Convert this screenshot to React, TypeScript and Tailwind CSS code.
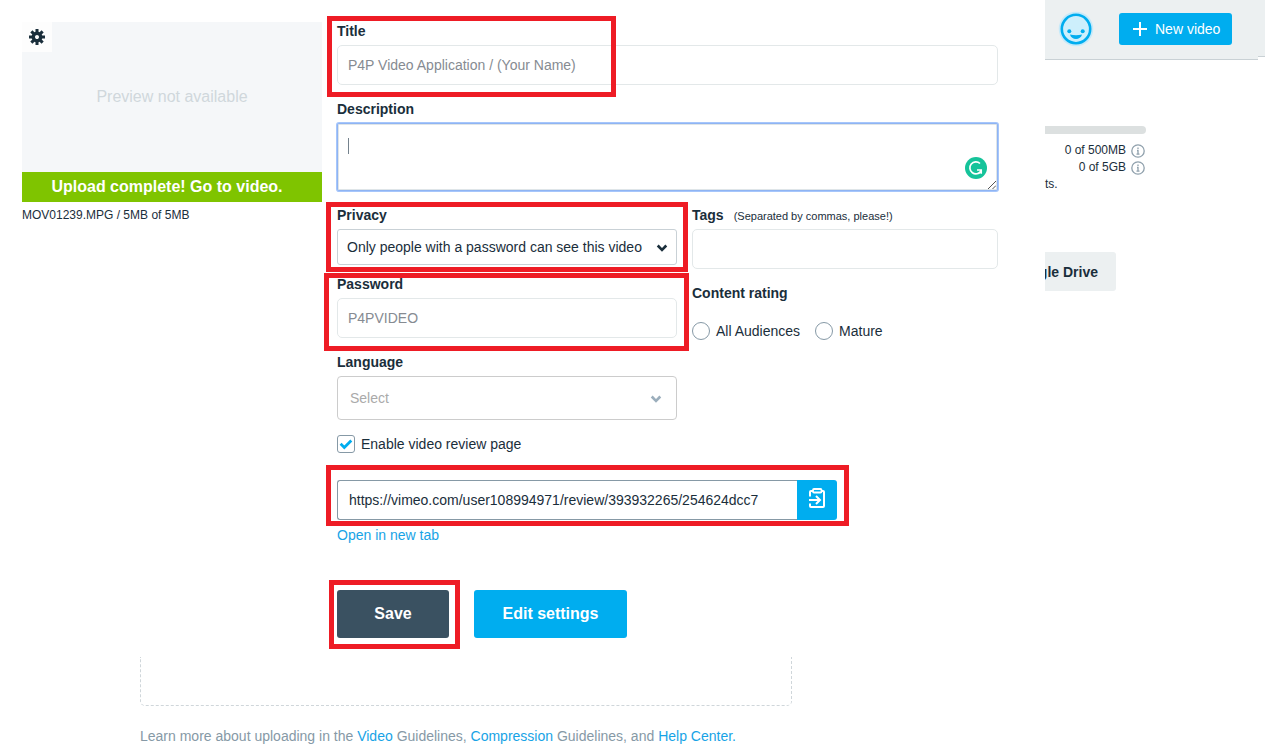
import type { ReactNode } from "react"

const inputClass =
  "h-10 w-full rounded-[5px] border border-[#e3e8e9] bg-white px-2.5 text-sm text-[#868b92] outline-none"

export default function App() {
  return (
    <div className="bg-white font-['Liberation_Sans',Arial,sans-serif] text-sm text-[#1a2e3b]">
      <div className="flex">
        <main className="flex min-w-0 flex-1 items-start gap-[15px] pt-[22px] pr-[47px] pl-[22px]">
          <UploadPreview />
          <VideoForm />
        </main>
        <Sidebar />
      </div>
      <Footer />
    </div>
  )
}

function Highlight({ className }: { className: string }) {
  return (
    <span aria-hidden className={`pointer-events-none absolute z-10 border-[5px] border-[#ee1c25] ${className}`} />
  )
}

function Label({ htmlFor, children }: { htmlFor: string; children: ReactNode }) {
  return (
    <label htmlFor={htmlFor} className="mb-[5px] block leading-[18px] font-bold">
      {children}
    </label>
  )
}

function Chevron({ className }: { className: string }) {
  return (
    <svg
      aria-hidden
      viewBox="0 0 12 8"
      className={`pointer-events-none absolute h-2 w-3 ${className}`}
      fill="none"
      stroke="currentColor"
      strokeWidth="2.6"
    >
      <path d="M1.700 1.500 6 5.800l4.300-4.300" />
    </svg>
  )
}

function UploadPreview() {
  return (
    <section className="w-[300px] shrink-0">
      <div className="relative flex h-[150px] items-center justify-center bg-[#f5f7f9] text-base text-[#d0d7dc]">
        <button type="button" aria-label="Settings" className="absolute top-0 left-0 flex size-[30px] items-center justify-center bg-[#fdfdfd]">
          <GearIcon />
        </button>
        Preview not available
      </div>
      <a href="#" className="block bg-[#7fc400] pr-2.5 text-center text-base leading-[30px] font-bold text-white">
        Upload complete! Go to video.
      </a>
      <p className="mt-1 text-xs leading-[18px]">MOV01239.MPG / 5MB of 5MB</p>
    </section>
  )
}

function GearIcon() {
  return (
    <svg aria-hidden viewBox="-8 -8 16 16" className="size-4 text-[#1a2e3b]" fill="none" stroke="currentColor">
      <circle r="3.700" strokeWidth="3.400" />
      {[0, 45, 90, 135].map((a) => (
        <path key={a} d="M0-8v4M0 4v4" strokeWidth="3" transform={`rotate(${a})`} />
      ))}
    </svg>
  )
}

function VideoForm() {
  return (
    <form className="min-w-0 flex-1">
      <div className="relative">
        <Highlight className="-top-1.5 -left-2.5 h-[81px] w-[289px]" />
        <Label htmlFor="title">Title</Label>
        <input id="title" className={inputClass} defaultValue="P4P Video Application / (Your Name)" />
      </div>

      <div className="mt-[15px]">
        <Label htmlFor="description">Description</Label>
        <div className="relative">
          <textarea
            id="description"
            className="block h-[68px] w-full resize-none rounded-[2px] border border-[#8fb4f3] bg-white p-2.5 shadow-[0_0_0_1px_#a6c6fb,inset_0_0_0_1px_#dfe5e8] outline-none"
          />
          <span aria-hidden className="absolute top-[15px] left-[11px] h-4 w-px bg-[#75828d]" />
          <svg aria-hidden viewBox="0 0 22 22" className="absolute right-[11px] bottom-3 size-[22px]">
            <circle cx="11" cy="11" r="11" fill="#15c39a" />
            <path
              d="M15 6.500A6 6 0 1 0 16 14M12 13h4.200v3.800"
              fill="none"
              stroke="#fff"
              strokeWidth="1.700"
            />
          </svg>
          <svg aria-hidden viewBox="0 0 8 8" className="absolute right-0.5 bottom-0.5 size-2" stroke="#555" strokeWidth="1">
            <path d="M0 8 8 0M4.500 8 8 4.500" />
          </svg>
        </div>
      </div>

      <div className="mt-[15px] grid grid-cols-[340px_1fr] gap-[15px]">
        <div>
          <div className="relative">
            <Highlight className="-top-1 -left-[11px] h-[70px] w-[362px]" />
            <Label htmlFor="privacy">Privacy</Label>
            <div className="relative">
              <select
                id="privacy"
                className="block h-9 w-full appearance-none rounded-[3px] border border-[#c9d1d6] bg-white pr-8 pl-[9px] text-sm outline-none"
              >
                <option>Only people with a password can see this video</option>
              </select>
              <Chevron className="top-[15px] right-[9px]" />
            </div>
          </div>

          <div className="relative mt-2.5">
            <Highlight className="-top-0.5 -left-[13px] h-[78px] w-[365px]" />
            <Label htmlFor="password">Password</Label>
            <input id="password" className={inputClass} defaultValue="P4PVIDEO" />
          </div>

          <div className="mt-[15px]">
            <Label htmlFor="language">Language</Label>
            <div className="relative">
              <select
                id="language"
                className="block h-11 w-full appearance-none rounded-[4px] border border-[#cccccc] bg-white pr-8 pl-3 text-sm text-[#aaaaaa] outline-none"
              >
                <option>Select</option>
              </select>
              <Chevron className="top-[19px] right-[15px] text-[#9baebc]" />
            </div>
          </div>

          <label className="mt-[15px] flex items-center gap-1.5 leading-[18px]">
            <span className="relative size-[18px]">
              <input
                type="checkbox"
                defaultChecked
                className="peer block size-[18px] appearance-none rounded-[3px] border border-[#8699a6] bg-white"
              />
              <svg
                aria-hidden
                viewBox="0 0 18 18"
                className="pointer-events-none absolute inset-0 hidden size-[18px] peer-checked:block"
                fill="none"
                stroke="#00adef"
                strokeWidth="2.800"
              >
                <path d="m3.600 8.800 3.700 3.700L14.300 5.500" />
              </svg>
            </span>
            Enable video review page
          </label>
        </div>

        <div>
          <div className="mb-[5px] flex h-[18px] items-baseline gap-2.5 leading-[18px]">
            <label htmlFor="tags" className="font-bold">
              Tags
            </label>
            <span className="text-[11px]">(Separated by commas, please!)</span>
          </div>
          <input id="tags" className={inputClass} />

          <fieldset className="mt-[15px]">
            <legend className="leading-[18px] font-bold">Content rating</legend>
            <div className="mt-5 flex gap-[15px] leading-[18px]">
              <Radio label="All Audiences" />
              <Radio label="Mature" />
            </div>
          </fieldset>
        </div>
      </div>

      <div className="relative mt-[27px] flex w-[500px]">
        <Highlight className="-top-[15px] -left-[11px] h-[61px] w-[523px]" />
        <input
          readOnly
          aria-label="Review page link"
          className="h-10 min-w-0 flex-1 rounded-l-[3px] border border-r-0 border-[#8699a6] bg-white px-[11px] text-sm outline-none"
          value="https://vimeo.com/user108994971/review/393932265/254624dcc7"
        />
        <button type="button" aria-label="Copy link" className="flex size-10 justify-center rounded-r-[3px] bg-[#00adef] pt-2">
          <svg aria-hidden viewBox="0 0 16 20" className="h-5 w-4" fill="none" stroke="#fff" strokeWidth="2">
            <path d="M1 8.500V4q0-1 1-1h2M12 3h2q1 0 1 1v14q0 1-1 1H2q-1 0-1-1v-2.500" />
            <rect x="4" y="1" width="8.500" height="3.500" rx="1" fill="#00adef" strokeWidth="1.800" />
            <path d="M0 12h11M7 8l4 4-4 4" />
          </svg>
        </button>
      </div>
      <a href="#" className="mt-1.5 block w-fit leading-[18px] text-[#17a3e6]">
        Open in new tab
      </a>

      <div className="mt-[46px] flex gap-[25px] text-base font-bold text-white">
        <div className="relative">
          <Highlight className="-top-2.5 -left-2 h-[69px] w-[131px]" />
          <button type="button" className="h-12 w-28 rounded-[3px] bg-[#3a5161]">
            Save
          </button>
        </div>
        <button type="button" className="h-12 w-[153px] rounded-[3px] bg-[#00adef]">
          Edit settings
        </button>
      </div>
    </form>
  )
}

function Radio({ label }: { label: string }) {
  return (
    <label className="flex items-center gap-1.5">
      <input
        type="radio"
        name="rating"
        className="size-[18px] appearance-none rounded-full border border-[#8699a6] bg-white checked:border-[5px] checked:border-[#00adef]"
      />
      {label}
    </label>
  )
}

function InfoIcon() {
  return (
    <svg aria-hidden viewBox="0 0 14 14" className="size-3.5" fill="none" stroke="#8fa0ac">
      <circle cx="7" cy="7" r="6.200" strokeWidth="1.300" />
      <path d="M7 3.500v1.500M6 6.500h1v4M5.500 10.200h3" strokeWidth="1.300" />
    </svg>
  )
}

function Sidebar() {
  return (
    <aside className="w-[220px] shrink-0">
      <header className="flex items-start">
        <div className="flex h-[60px] flex-1 gap-[25px] border-b border-[#c9d1d5] bg-[#ecf0f1] pl-[13px]">
          <svg aria-hidden viewBox="-18 -18 36 36" className="mt-[11px] size-9 shrink-0">
            <circle r="17.300" fill="#c5eafa" />
            <circle r="14.200" fill="#cdeffc" stroke="#00adef" strokeWidth="2.600" />
            <circle cx="-6.700" cy="2.300" r="2" fill="#00adef" />
            <circle cx="6.700" cy="2.300" r="2" fill="#00adef" />
            <path d="M-6 5.600q6 1.200 12 0C4.800 11.500-4.800 11.500-6 5.600Z" fill="#00adef" />
          </svg>
          <button type="button" className="mt-[13px] flex h-8 w-[113px] shrink-0 items-center gap-2 rounded-[3px] bg-[#00adef] pl-3.5 text-white">
            <svg aria-hidden viewBox="0 0 14 14" className="size-3.5" stroke="currentColor" strokeWidth="2">
              <path d="M7 0v14M0 7h14" />
            </svg>
            <span className="whitespace-nowrap">New video</span>
          </button>
        </div>
        <div className="h-[57px] w-[7px] border-b border-[#c9d1d5] bg-[#ecf0f1]" />
      </header>

      <div className="mt-[66px] w-[101px]">
        <div className="h-2 rounded-r-full bg-[#dce0e0]" />
        <ul className="mt-2 text-xs leading-[17px]">
          <li className="flex items-center justify-end gap-[5px] pr-px">
            0 of 500MB <InfoIcon />
          </li>
          <li className="flex items-center justify-end gap-[5px] pr-px">
            0 of 5GB <InfoIcon />
          </li>
          <li>ts.</li>
        </ul>
      </div>

      <button type="button" className="mt-[59px] flex h-[39px] w-[71px] items-center justify-end overflow-hidden rounded-r-[3px] bg-[#ecf0f1] pr-[18px] font-bold whitespace-nowrap">
        gle Drive
      </button>
    </aside>
  )
}

function Footer() {
  return (
    <footer className="mt-[19px] pb-1 pl-[140px]">
      <div className="h-[49px] w-full max-w-[652px] rounded-b-[5px] border border-t-0 border-dashed border-[#cfd6da]" />
      <p className="mt-5 leading-5 text-[#8699a6]">
        Learn more about uploading in the{" "}
        <a href="#" className="text-[#17a3e6]">
          Video
        </a>{" "}
        Guidelines,{" "}
        <a href="#" className="text-[#17a3e6]">
          Compression
        </a>{" "}
        Guidelines, and{" "}
        <a href="#" className="text-[#17a3e6]">
          Help Center.
        </a>
      </p>
    </footer>
  )
}
